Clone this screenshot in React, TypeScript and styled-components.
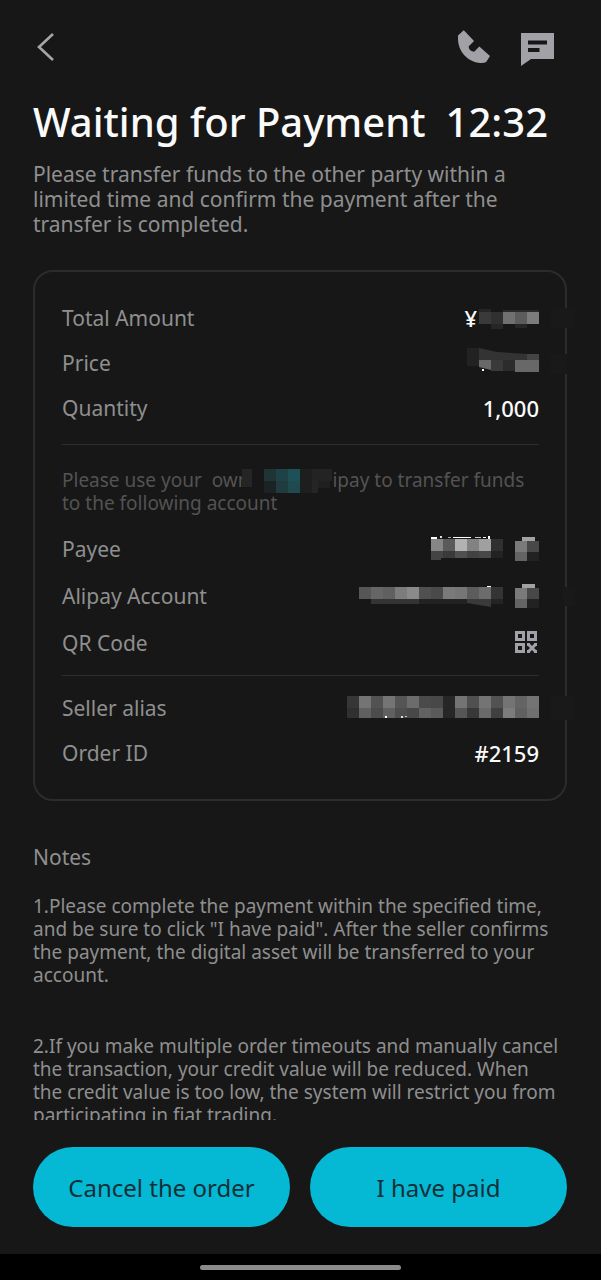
import React from "react";
import styled, { createGlobalStyle } from "styled-components";

const Global = createGlobalStyle`
  * { box-sizing: border-box; }
  body {
    margin: 0;
    background: #171717;
    color: #8f8f8f;
    font-family: "Noto Sans", Roboto, sans-serif;
  }
  h1, h2, p, dl, dd { margin: 0; }
`;

const Screen = styled.div`
  display: flex;
  flex-direction: column;
  height: 100vh;
  background: #171717;
`;

const Content = styled.main`
  flex: 1;
  min-height: 0;
  overflow-y: auto;
  scrollbar-width: none;
  padding: 23px 34px 0 33px;
`;

const TopBar = styled.header`
  display: flex;
  align-items: center;
  height: 48px;
  gap: 24px;
`;

const IconButton = styled.button<{ $push?: boolean }>`
  display: flex;
  padding: 0;
  border: 0;
  background: none;
  color: #a2a1a8;
  cursor: pointer;
  margin-right: ${(p) => (p.$push ? "auto" : "0")};
`;

const Actions = styled.div`
  display: flex;
  align-items: center;
  gap: 28px;
  margin-right: 13px;
`;

const Title = styled.h1`
  display: flex;
  gap: 20px;
  margin-top: 25px;
  font-size: 40px;
  line-height: 52px;
  font-weight: 500;
  color: #fafafa;
  white-space: nowrap;
`;

const Lead = styled.p`
  margin-top: 14px;
  font-size: 21px;
  line-height: 25px;
`;

const Card = styled.section`
  margin: 33px 0 0;
  padding: 23px 26px 24px 27px;
  border: 2px solid #2c2c2c;
  border-radius: 20px;
`;

const Rows = styled.dl``;

const Row = styled.div<{ $tall?: boolean }>`
  display: flex;
  align-items: center;
  justify-content: space-between;
  height: ${(p) => (p.$tall ? 47 : 45)}px;
  font-size: 21px;
  line-height: 24px;
`;

const Value = styled.dd`
  display: flex;
  align-items: center;
  gap: 2px;
  color: #fafafa;
  font-size: 22px;
  font-weight: 500;
`;

const Divider = styled.hr<{ $before?: number; $after?: number }>`
  height: 1px;
  border: 0;
  background: #2e2e2e;
  margin: ${(p) => p.$before ?? 14}px 0 ${(p) => p.$after ?? 24}px;
`;

const Hint = styled.p`
  margin-bottom: 10px;
  font-size: 19px;
  line-height: 23px;
  color: #535353;
  white-space: nowrap;
`;

const Mosaic = styled.svg`
  display: block;
  overflow: visible;
  flex: none;
`;

const InlineMosaic = styled(Mosaic)`
  display: inline-block;
  margin-left: 10px;
  vertical-align: top;
`;

const NotesTitle = styled.h2`
  margin: 44px 0 26px;
  font-size: 21px;
  line-height: 24px;
  font-weight: 400;
`;

const Note = styled.p`
  margin-bottom: 48px;
  font-size: 19px;
  line-height: 23px;
  white-space: nowrap;
`;

const Footer = styled.footer`
  display: flex;
  gap: 20px;
  padding: 27px 34px 27px 33px;
`;

const PillButton = styled.button`
  flex: 1;
  height: 80px;
  border: 0;
  border-radius: 40px;
  background: #05b8d4;
  color: #123038;
  font-family: inherit;
  font-size: 24px;
  cursor: pointer;
`;

const NavBar = styled.div`
  display: flex;
  justify-content: center;
  align-items: center;
  height: 26px;
  background: #000;
`;

const Handle = styled.div`
  width: 201px;
  height: 5px;
  border-radius: 3px;
  background: #8b8b8b;
`;

type Cell = [x: number, y: number, w: number, h: number, fill: string];

const Cells = ({ cells }: { cells: Cell[] }) => (
  <>
    {cells.map(([x, y, w, h, fill], i) => (
      <rect key={i} x={x} y={y} width={w} height={h} fill={fill} />
    ))}
  </>
);

const strip = (y: number, h: number, shades: string[]): Cell[] =>
  shades.map((fill, i) => [i * 12, y, 12, h, fill]);

const amount: Cell[] = [
  ...strip(0, 12, ["#3a3a3a", "#303030", "#707070", "#5c5c5c", "#7c7c7c"]),
  [0, -3, 12, 3, "#262626"], [24, -2, 36, 2, "#2a2a2a"],
  [12, 12, 12, 5, "#262626"], [36, 12, 12, 4, "#262626"],
  [72, -4, 24, 20, "#191919"],
];
const price: Cell[] = [
  [24, 11, 12, 11, "#3a3a3a"], [36, 11, 12, 11, "#2c2c2c"], [48, 11, 24, 12, "#686868"],
  [60, 5, 12, 6, "#444444"], [15, 20, 2, 2, "#ffffff"], [84, 5, 16, 20, "#191919"],
];
const payee: Cell[] = [
  ...strip(0, 12, ["#868686", "#5a5a5a", "#b2b2b2", "#828282", "#a0a0a0", "#303030"]),
  ...strip(12, 7, ["#444444", "#3a3a3a", "#505050", "#424242", "#484848", "#222222"]),
  [0, 19, 10, 2, "#444444"],
  [0, -2, 6, 2, "#ffffff"], [9, -3, 2, 2, "#e0e0e0"], [17, -2, 3, 1, "#aaaaaa"],
  [22, -2, 18, 1, "#ffffff"], [44, -2, 6, 1, "#cccccc"], [52, -2, 3, 1, "#ffffff"], [57, -3, 2, 3, "#ffffff"],
];
const account: Cell[] = [
  ...strip(0, 12, ["#565656", "#666666", "#606060", "#7c7c7c", "#8a8a8a", "#505050", "#4a4a4a", "#7a7a7a", "#767676", "#5c5c5c", "#6c6c6c", "#343434"]),
  [12, 12, 48, 5, "#343434"], [60, 12, 48, 5, "#222222"],
  [128, -1, 4, 1, "#ffffff"], [132, 12, 12, 5, "#242424"],
  [204, 0, 12, 19, "#191919"],
];
const alias: Cell[] = [
  ...strip(0, 12, ["#363636", "#747474", "#525252", "#747474", "#555555", "#6c6c6c", "#4a4a4a", "#484848", "#272727", "#747474", "#505050", "#747474", "#525252", "#747474", "#646464", "#747474"]),
  ...strip(12, 10, ["#303030", "#606060", "#4c4c4c", "#606060", "#4d4d4d", "#484848", "#626262", "#5a5a5a", "#262626", "#565656", "#383838", "#6a6a6a", "#404040", "#7c7c7c", "#606060", "#707070"]),
  [38, 20, 2, 2, "#ffffff"], [54, 20, 2, 2, "#dddddd"], [58, 20, 2, 1, "#bbbbbb"],
  [204, 0, 24, 24, "#191919"],
];
const brand: Cell[] = [
  [-22, 0, 10, 18, "#252525"], [-12, 0, 12, 23, "#171717"],
  [0, 0, 12, 12, "#203436"], [12, 0, 12, 12, "#1e4248"], [24, 0, 12, 12, "#1e5058"],
  [0, 12, 12, 12, "#1b2324"], [12, 12, 12, 12, "#203c40"], [24, 12, 12, 12, "#1e4a50"],
  [36, 0, 12, 24, "#1d1e1e"], [48, 0, 20, 12, "#232323"], [48, 12, 6, 12, "#252525"], [54, 12, 12, 7, "#202020"],
];
const copy: Cell[] = [
  [0, 1, 12, 11, "#7a7a7a"], [12, 1, 12, 11, "#484848"],
  [0, 12, 12, 9, "#646464"], [12, 12, 12, 9, "#222222"],
];

const CopyIcon = () => (
  <Mosaic width="24" height="21" viewBox="0 -2 24 21">
    <path d="M7 -3H20V4H7Z" fill="#a2a1a8" />
    <Cells cells={copy} />
  </Mosaic>
);

const CopyButton = styled(IconButton)`
  margin-left: 10px;
`;

export default function App() {
  return (
    <Screen>
      <Global />
      <Content>
        <TopBar>
          <IconButton $push aria-label="Back">
            <svg width="24" height="30" viewBox="0 0 24 30" fill="none" stroke="#a6a6a6" strokeWidth="2.6">
              <path d="M20 2 6 15 20 28" />
            </svg>
          </IconButton>
          <Actions>
            <IconButton aria-label="Call">
              <svg width="36" height="36" viewBox="16 9 36 36" fill="currentColor">
                <path d="M23.8 10.200 34 21 28.600 26.400Q29.200 31.200 34.200 31.800L39.300 26.600 50 36 46.200 42Q44 43.200 40.500 43C27.500 41.800 18 31.500 18 18.500V15.600Z" />
              </svg>
            </IconButton>
            <IconButton aria-label="Chat">
              <svg width="34" height="38" viewBox="0 -4 34 38" fill="currentColor">
                <path fillRule="evenodd" d="M1 1H34V27H11L1 34ZM8 8.500V12.500H27V8.500ZM8 16V20H19.500V16Z" />
              </svg>
            </IconButton>
          </Actions>
        </TopBar>

        <Title>
          <span>Waiting for Payment</span>
          <span>12:32</span>
        </Title>
        <Lead>
          Please transfer funds to the other party within a
          <br />
          limited time and confirm the payment after the
          <br />
          transfer is completed.
        </Lead>

        <Card>
          <Rows>
            <Row>
              <dt>Total Amount</dt>
              <Value>
                ¥
                <Mosaic width="60" height="12">
                  <Cells cells={amount} />
                </Mosaic>
              </Value>
            </Row>
            <Row>
              <dt>Price</dt>
              <Value>
                <Mosaic width="72" height="24" viewBox="0 2 72 24">
                  <rect x="0" y="-1" width="12" height="18" fill="#222" />
                  <path d="M12-1 30 3 60 5V12H12Z" fill="#333" />
                  <path d="M12 11H24V21L12 18Z" fill="#686868" />
                  <Cells cells={price} />
                </Mosaic>
              </Value>
            </Row>
            <Row>
              <dt>Quantity</dt>
              <Value>1,000</Value>
            </Row>
          </Rows>
          <Divider />
          <Hint>
            Please use your&nbsp; own{" "}
            <InlineMosaic width="68" height="23">
              <Cells cells={brand} />
            </InlineMosaic>
            ipay to transfer funds
            <br />
            to the following account
          </Hint>
          <Rows>
            <Row $tall>
              <dt>Payee</dt>
              <Value>
                <Mosaic width="72" height="19">
                  <Cells cells={payee} />
                </Mosaic>
                <CopyButton aria-label="Copy payee">
                  <CopyIcon />
                </CopyButton>
              </Value>
            </Row>
            <Row $tall>
              <dt>Alipay Account</dt>
              <Value>
                <Mosaic width="144" height="17">
                  <Cells cells={account} />
                  <path d="M108 12H132V20L108 16Z" fill="#3a3a3a" />
                </Mosaic>
                <CopyButton aria-label="Copy account">
                  <CopyIcon />
                </CopyButton>
              </Value>
            </Row>
            <Row $tall>
              <dt>QR Code</dt>
              <Value>
                <IconButton aria-label="Show QR code">
                  <svg width="24" height="24" viewBox="0 0 24 24" fill="none" stroke="currentColor" strokeWidth="3">
                    <path d="M1.500 1.500H8.500V8.500H1.500ZM13.500 1.500H20.500V8.500H13.500ZM1.500 13.500H8.500V20.500H1.500Z" />
                    <path d="M13 13 21 21M21 13 13 21" />
                    <path d="M12 13.500H15M19 13.500H22M12 20.500H15M19 20.500H22" />
                  </svg>
                </IconButton>
              </Value>
            </Row>
          </Rows>
          <Divider $before={9} $after={9} />
          <Rows>
            <Row>
              <dt>Seller alias</dt>
              <Value>
                <Mosaic width="192" height="24">
                  <Cells cells={alias} />
                </Mosaic>
              </Value>
            </Row>
            <Row>
              <dt>Order ID</dt>
              <Value>#2159</Value>
            </Row>
          </Rows>
        </Card>

        <NotesTitle>Notes</NotesTitle>
        <Note>
          1.Please complete the payment within the specified time,
          <br />
          and be sure to click "I have paid". After the seller confirms
          <br />
          the payment, the digital asset will be transferred to your
          <br />
          account.
        </Note>
        <Note>
          2.If you make multiple order timeouts and manually cancel
          <br />
          the transaction, your credit value will be reduced. When
          <br />
          the credit value is too low, the system will restrict you from
          <br />
          participating in fiat trading.
        </Note>
      </Content>
      <Footer>
        <PillButton>Cancel the order</PillButton>
        <PillButton>I have paid</PillButton>
      </Footer>
      <NavBar>
        <Handle />
      </NavBar>
    </Screen>
  );
}
